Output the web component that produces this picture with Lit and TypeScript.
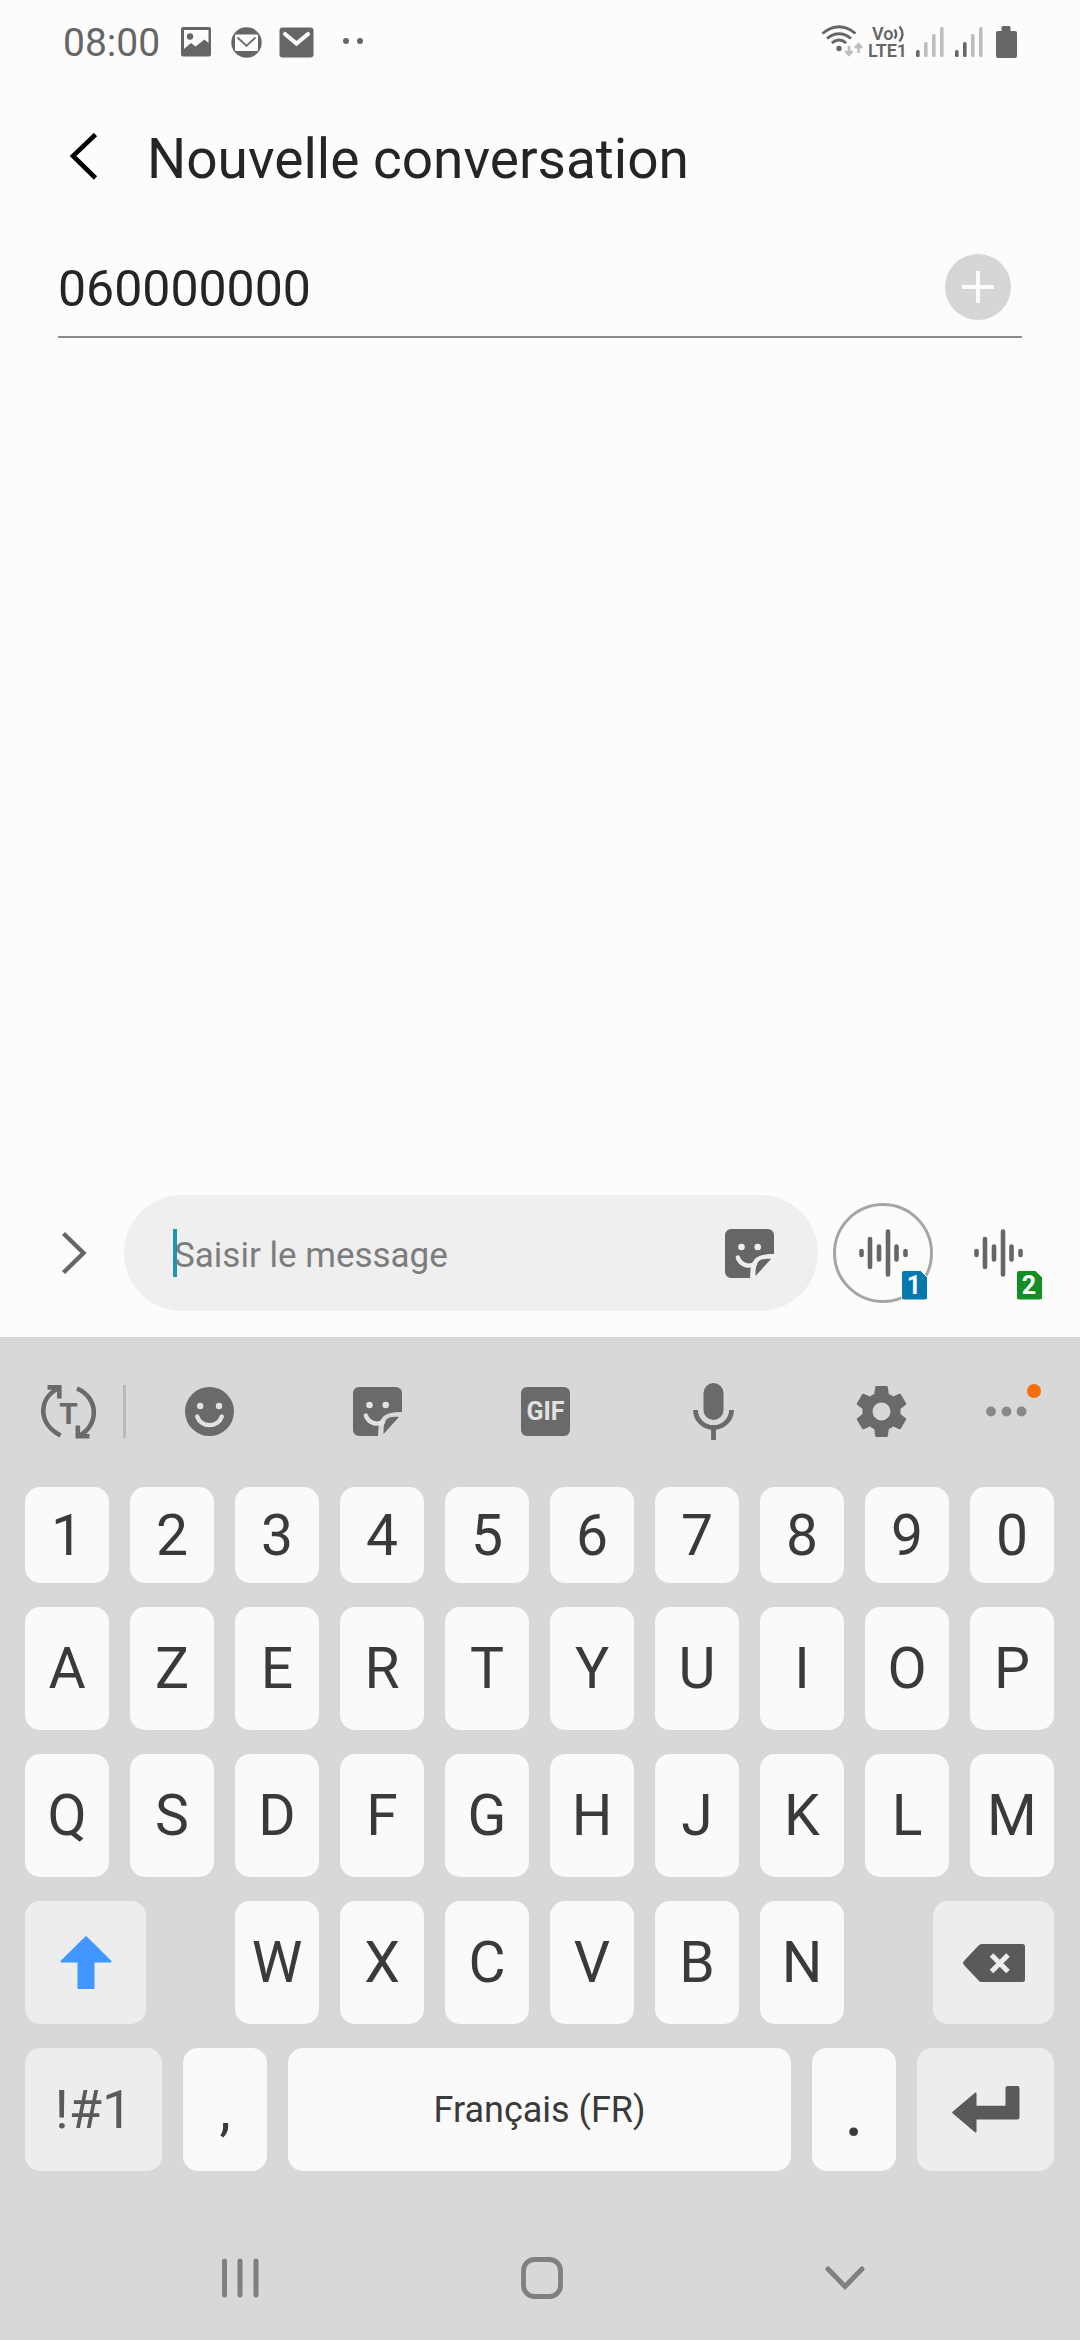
import { LitElement, html, svg, css } from "lit";
import { customElement, property, state } from "lit/decorators.js";

const sticker = html`
  <svg width="49" height="49" viewBox="0 0 49 49" aria-hidden="true">
    <path fill="currentColor" d="M6 0H43a6 6 0 0 1 6 6V25C39 25 33 26.5 29.5 30.5C26 34.500 25.500 39 25 49H6a6 6 0 0 1-6-6V6a6 6 0 0 1 6-6Z" />
    <path fill="currentColor" d="M30.500 47L46 30C40 29.500 36 30 33.500 32.500C30.500 36 30.500 41 30.500 47Z" />
    <circle class="cut" cx="16.500" cy="18" r="3.300" />
    <circle class="cut" cx="32.700" cy="18" r="3.300" />
    <path class="cut-line" d="M12.800 28.500C15.500 36 23.500 38.500 30 35" />
  </svg>`;

const wave = html`
  <svg width="52" height="48" viewBox="0 0 52 48" aria-hidden="true">
    <g stroke="currentColor" stroke-width="4.600" stroke-linecap="round">
      <path d="M4.500 22v4M13 10v28M22 17.500v13M31 2.500v43M39.500 17.500v13M48.500 22v4" />
    </g>
  </svg>`;

const toolIcons = [
  {
    label: "Émojis",
    art: html`<svg width="49" height="49" viewBox="0 0 49 49" aria-hidden="true">
      <circle fill="currentColor" cx="24.500" cy="24.500" r="24.500" />
      <circle class="cut" cx="15.200" cy="19" r="3.200" />
      <circle class="cut" cx="34" cy="19" r="3.200" />
      <path class="cut-line" d="M12.200 29.500C16 41 33 41 36.800 29.500" />
    </svg>`,
  },
  { label: "Autocollants", art: sticker },
  {
    label: "GIF",
    art: html`<svg width="49" height="49" viewBox="0 0 49 49" aria-hidden="true">
      <rect fill="currentColor" width="49" height="49" rx="6" />
      <text class="cut gif" x="24.500" y="33" text-anchor="middle">GIF</text>
    </svg>`,
  },
  {
    label: "Saisie vocale",
    art: html`<svg width="41" height="57" viewBox="0 0 41 57" aria-hidden="true">
      <rect fill="currentColor" x="10.500" width="20" height="37" rx="10" />
      <path fill="none" stroke="currentColor" stroke-width="4.800" d="M2.500 27a18 17.500 0 0 0 36 0M20.500 44.500V57" />
    </svg>`,
  },
  {
    label: "Paramètres",
    art: html`<svg width="61" height="61" viewBox="0 0 24 24" aria-hidden="true">
      <path
        fill="currentColor"
        d="M19.430 12.980c.04-.32.07-.64.07-.98s-.03-.66-.07-.98l2.110-1.650c.19-.15.24-.42.12-.64l-2-3.460c-.12-.22-.39-.3-.61-.22l-2.490 1c-.52-.4-1.080-.73-1.690-.98l-.38-2.650C14.460 2.180 14.250 2 14 2h-4c-.25 0-.46.18-.49.42l-.38 2.650c-.61.25-1.170.59-1.690.98l-2.490-1c-.23-.09-.49 0-.61.22l-2 3.460c-.13.22-.07.49.12.64l2.110 1.650c-.04.32-.07.65-.07.98s.03.66.07.98l-2.110 1.650c-.19.15-.24.42-.12.64l2 3.460c.12.22.39.3.61.22l2.490-1c.52.4 1.080.73 1.690.98l.38 2.650c.03.24.24.42.49.42h4c.25 0 .46-.18.49-.42l.38-2.650c.61-.25 1.170-.59 1.690-.98l2.490 1c.23.09.49 0 .61-.22l2-3.460c.12-.22.07-.49-.12-.64l-2.110-1.650zM12 15.500c-1.930 0-3.500-1.570-3.500-3.500s1.570-3.500 3.500-3.500 3.500 1.570 3.500 3.500-1.570 3.500-3.500 3.500z"
      />
    </svg>`,
  },
];

/** Colours shared by the drawings that punch shapes out of a solid icon. */
const iconStyles = css`
  svg {
    display: block;
  }
  .cut {
    fill: var(--cut);
  }
  .cut-line {
    fill: none;
    stroke: var(--cut);
    stroke-width: 4.4px;
    stroke-linecap: round;
  }
  button {
    margin: 0;
    padding: 0;
    border: 0;
    background: none;
    color: inherit;
    font: inherit;
    display: flex;
    align-items: center;
    justify-content: center;
    cursor: pointer;
  }
`;

@customElement("status-bar")
export class StatusBar extends LitElement {
  static styles = [
    iconStyles,
    css`
      :host {
        display: flex;
        justify-content: space-between;
        align-items: center;
        height: 84px;
        padding: 0 63px;
        color: #666;
        --cut: #fcfcfc;
      }
      .notices,
      .system {
        display: flex;
        align-items: center;
      }
      .time {
        width: 108px;
        padding-top: 1px;
        font-size: 39px;
      }
      .notice {
        display: flex;
        justify-content: center;
        width: 50px;
      }
      .notice.more {
        width: 64px;
      }
      .system {
        gap: 6px;
      }
      .faint {
        color: #bebebe;
      }
      .volte {
        font-family: Roboto, "Liberation Sans", sans-serif;
        font-weight: 600;
        font-size: 18px;
      }
    `,
  ];

  private signal(strength: number) {
    const bars = [7, 15, 23, 30];
    return html`<svg width="33" height="32" viewBox="0 0 33 32" aria-hidden="true">
      ${bars.map(
        (h, i) => svg`<rect class=${i < strength ? "" : "faint"} fill="currentColor"
          x=${1 + i * 8} y=${31 - h} width="3.600" height=${h} rx="1.500" />`,
      )}
    </svg>`;
  }

  render() {
    return html`
      <div class="notices">
        <time class="time">08:00</time>
        <span class="notice">
          <svg width="30" height="30" viewBox="0 0 30 30" aria-hidden="true">
            <rect fill="currentColor" width="30" height="29.500" rx="2" />
            <path class="cut" d="M3 3H27.500V16L23.500 12.500L14.500 19.500L10 16L3 22Z" />
            <circle fill="currentColor" cx="9" cy="9.500" r="3.200" />
          </svg>
        </span>
        <span class="notice">
          <svg width="31" height="31" viewBox="0 0 31 31" aria-hidden="true">
            <circle fill="currentColor" cx="15.500" cy="15.500" r="15.200" />
            <rect class="cut" x="4" y="7.500" width="23" height="16.500" rx="1" />
            <path fill="none" stroke="currentColor" stroke-width="1.800" d="M6.500 10.500L15.500 18.800L24.500 10.500" />
          </svg>
        </span>
        <span class="notice">
          <svg width="35" height="31" viewBox="0 0 35 31" aria-hidden="true">
            <rect fill="currentColor" x=".5" y=".5" width="34" height="30" rx="3" />
            <path fill="none" stroke="#fcfcfc" stroke-width="4.200" stroke-linecap="round" d="M6 7L17.500 16.500L29 7" />
          </svg>
        </span>
        <span class="notice more">
          <svg width="22" height="8" viewBox="0 0 22 8" aria-hidden="true">
            <circle fill="currentColor" cx="4" cy="3" r="3" />
            <circle fill="currentColor" cx="18" cy="3" r="3" />
          </svg>
        </span>
      </div>
      <div class="system">
        <svg width="42" height="34" viewBox="0 0 42 34" aria-hidden="true">
          <g fill="none" stroke="currentColor" stroke-width="2.800">
            <path d="M1.500 8.500Q18 -5 34.500 8.500M6 13.500Q18 4 30 13.500M10.800 18Q18 12 25.200 18" />
          </g>
          <circle fill="currentColor" cx="18" cy="23.500" r="2.700" />
          <g class="faint" fill="none" stroke="currentColor" stroke-width="2.600">
            <path d="M28 21V29.500M24.500 26L28 29.800L31.500 26M37.500 28V19.500M34 23L37.500 19.200L41 23" />
          </g>
        </svg>
        <svg class="volte" width="40" height="36" viewBox="0 0 40 36" aria-hidden="true">
          <text fill="currentColor" x="3" y="16">Vo</text>
          <text fill="currentColor" x="-1" y="33">LTE1</text>
          <g fill="none" stroke="currentColor" stroke-width="2.400">
            <path d="M25.500 5.500Q29 10 25.500 14.500M30.500 2.500Q36.500 10 30.500 17.500" />
          </g>
        </svg>
        ${this.signal(1)} ${this.signal(2)}
        <svg width="24" height="33" viewBox="0 0 24 33" aria-hidden="true">
          <path fill="currentColor" d="M10 0h6a1.500 1.500 0 0 1 1.500 1.500V5H22a2 2 0 0 1 2 2V30a2 2 0 0 1-2 2H5a2 2 0 0 1-2-2V7a2 2 0 0 1 2-2H8.500V1.500A1.500 1.500 0 0 1 10 0Z" />
        </svg>
      </div>
    `;
  }
}

@customElement("voice-button")
export class VoiceButton extends LitElement {
  @property({ type: Number }) sim = 1;
  @property({ type: Boolean, reflect: true }) selected = false;

  static styles = [
    iconStyles,
    css`
      :host {
        display: block;
        color: #666;
      }
      .voice {
        position: relative;
        box-sizing: border-box;
        width: 100px;
        height: 100px;
        border: 3px solid transparent;
        border-radius: 50%;
      }
      :host([selected]) .voice {
        border-color: #a5a5a5;
      }
      .badge {
        position: absolute;
        left: 65px;
        top: 64px;
      }
      .one {
        fill: #0479ad;
      }
      .two {
        fill: #118f25;
      }
      .digit {
        fill: #fff;
        font: 700 25px Roboto, "Liberation Sans", sans-serif;
      }
    `,
  ];

  render() {
    return html`<button class="voice" aria-label=${`Message vocal, SIM ${this.sim}`}>
      ${wave}
      <svg class="badge" width="27" height="31" viewBox="0 0 27 31" aria-hidden="true">
        <path class=${this.sim === 1 ? "one" : "two"} stroke="#fcfcfc" d="M3 .5H19.500L26.500 7.500V27.500a2.500 2.500 0 0 1-2.500 2.500H3a2.500 2.500 0 0 1-2.500-2.500V3A2.500 2.500 0 0 1 3 .5Z" />
        <text class="digit" x="13" y="24" text-anchor="middle">${this.sim}</text>
      </svg>
    </button>`;
  }
}

@customElement("soft-keyboard")
export class SoftKeyboard extends LitElement {
  static styles = [
    iconStyles,
    css`
      :host {
        display: block;
        background: #d8d8d8;
        color: #3a3a3a;
        --cut: #e2e2e2;
      }
      .tools {
        box-sizing: border-box;
        display: grid;
        grid-template-columns: 123px 3px repeat(5, 1fr) 115px;
        align-items: center;
        height: 150px;
        padding-bottom: 2px;
        border-top: 1px solid #d3d3d3;
        color: #6a6a6a;
      }
      .tool {
        height: 100px;
      }
      .translate {
        padding-left: 14px;
      }
      .rule {
        height: 53px;
        background: #b9b9b9;
      }
      .gif {
        font: 700 25px Roboto, "Liberation Sans", sans-serif;
      }
      .letter {
        font: 700 30px Roboto, "Liberation Sans", sans-serif;
      }
      .rows {
        display: grid;
        gap: 24px;
        padding: 0 26px 45px 25px;
      }
      .row {
        display: grid;
        grid-template-columns: repeat(10, 1fr);
        gap: 21px;
        height: 123px;
      }
      .row.digits {
        height: 96px;
      }
      .row.shifted {
        grid-template-columns: 121fr 47fr repeat(6, 84fr) 47fr 121fr;
      }
      .row.bottom {
        grid-template-columns: 137fr 84fr 503fr 84fr 137fr;
      }
      .key {
        border-radius: 15px;
        background: #fafafa;
        font-size: 57px;
        min-width: 0;
      }
      .key.action {
        background: #ededed;
        color: #5a5a5a;
      }
      .key.symbols {
        font-size: 54px;
      }
      .key.space {
        font-size: 36px;
      }
      .key.period {
        font-size: 78px;
      }
      .shift {
        color: #4296ff;
      }
      .nav {
        display: grid;
        grid-template-columns: repeat(3, 1fr);
        height: 124px;
        padding: 0 84px 0 89px;
        color: #808080;
      }
    `,
  ];

  private keys(chars: string) {
    return [...chars].map((c) => html`<button class="key">${c}</button>`);
  }

  render() {
    return html`
      <div class="tools">
        <button class="tool translate" aria-label="Traduire">
          <svg width="56" height="54" viewBox="0 0 56 54" aria-hidden="true">
            <g fill="none" stroke="currentColor" stroke-width="4.600">
              <path d="M19.500 50.500C-3 39 -3 14 17 3.500M6.500 2.400H18.300V13.500" />
              <path d="M36 3.500C58 13 58 40 38.500 50.500M36.800 40.500V51.200H48.500" />
            </g>
            <text class="letter" fill="currentColor" x="27.500" y="39" text-anchor="middle">T</text>
          </svg>
        </button>
        <span class="rule"></span>
        ${toolIcons.map((t) => html`<button class="tool" aria-label=${t.label}>${t.art}</button>`)}
        <button class="tool" aria-label="Plus d'options">
          <svg width="82" height="56" viewBox="0 0 82 56" aria-hidden="true">
            <g fill="#888">
              <circle cx="9" cy="27.500" r="4.900" />
              <circle cx="24.500" cy="27.500" r="4.900" />
              <circle cx="39.500" cy="27.500" r="4.900" />
            </g>
            <circle fill="#f76b09" cx="52" cy="7" r="7" />
          </svg>
        </button>
      </div>
      <div class="rows">
        <div class="row digits">${this.keys("1234567890")}</div>
        <div class="row">${this.keys("AZERTYUIOP")}</div>
        <div class="row">${this.keys("QSDFGHJKLM")}</div>
        <div class="row shifted">
          <button class="key action" aria-label="Majuscule">
            <svg class="shift" width="52" height="53" viewBox="0 0 52 53" aria-hidden="true">
              <path fill="currentColor" stroke="currentColor" stroke-width="2" stroke-linejoin="round" d="M26 1.200L50.500 25.500H33.500V52H18.500V25.500H1.500Z" />
            </svg>
          </button>
          <span></span>
          ${this.keys("WXCVBN")}
          <span></span>
          <button class="key action" aria-label="Effacer">
            <svg width="62" height="38" viewBox="0 0 62 38" aria-hidden="true">
              <path fill="currentColor" d="M18.500 0H59.500A2.500 2.500 0 0 1 62 2.500V35.500A2.500 2.500 0 0 1 59.500 38H18.500Q17 38 15.500 36.500L1 21Q-.8 19 1 17L15.500 1.500Q17 0 18.500 0Z" />
              <path stroke="#ededed" stroke-width="5" d="M28.500 11L45 27.500M45 11L28.500 27.500" />
            </svg>
          </button>
        </div>
        <div class="row bottom">
          <button class="key action symbols">!#1</button>
          <button class="key">,</button>
          <button class="key space">Français (FR)</button>
          <button class="key period">.</button>
          <button class="key action" aria-label="Entrée">
            <svg width="68" height="47" viewBox="0 0 68 47" aria-hidden="true">
              <path fill="currentColor" d="M55.500 0H65.500A2 2 0 0 1 67.500 2V31.500A2 2 0 0 1 65.500 33.500H24.500V45.500Q24.500 47 23 46.200L.8 27.500Q-.3 26.500 .8 25.500L23 6.800Q24.500 6 24.500 7.500V19.800H53.500V2A2 2 0 0 1 55.500 0Z" />
            </svg>
          </button>
        </div>
      </div>
      <nav class="nav" aria-label="Navigation">
        <button aria-label="Applications récentes">
          <svg width="38" height="42" viewBox="0 0 38 42" aria-hidden="true">
            <path stroke="currentColor" stroke-width="5" stroke-linecap="round" d="M3.500 4V38M19 4V38M35 4V38" />
          </svg>
        </button>
        <button aria-label="Accueil">
          <svg width="42" height="42" viewBox="0 0 42 42" aria-hidden="true">
            <rect fill="none" stroke="currentColor" stroke-width="4.800" x="2.500" y="2.500" width="37" height="37" rx="11" />
          </svg>
        </button>
        <button aria-label="Masquer le clavier">
          <svg width="40" height="24" viewBox="0 0 40 24" aria-hidden="true">
            <path fill="none" stroke="currentColor" stroke-width="5" stroke-linecap="round" d="M3 3L20 20.500L37 3" />
          </svg>
        </button>
      </nav>
    `;
  }
}

@customElement("app-root")
export class AppRoot extends LitElement {
  @state() private recipient = "060000000";

  static styles = [
    iconStyles,
    css`
      :host {
        display: flex;
        flex-direction: column;
        min-height: 100vh;
        background: #fcfcfc;
        color: #252525;
        font-family: Roboto, "Liberation Sans", sans-serif;
        --cut: #efefef;
      }
      input {
        box-sizing: border-box;
        min-width: 0;
        border: 0;
        outline: 0;
        background: none;
        color: inherit;
        font-family: inherit;
      }
      .header {
        display: flex;
        align-items: center;
        height: 150px;
        padding-left: 21px;
      }
      .back {
        width: 126px;
        height: 100px;
        color: #000;
      }
      .title {
        margin: 0;
        font-size: 55px;
        font-weight: 400;
      }
      .recipient {
        display: flex;
        align-items: center;
        height: 98px;
        margin: 0 58px;
        padding: 4px 11px 0 0;
        border-bottom: 2px solid #8c8c8c;
      }
      .number {
        flex: 1;
        padding: 4px 0 0;
        font-size: 50px;
      }
      .thread {
        flex: 1;
      }
      .compose {
        display: flex;
        align-items: center;
        gap: 15px;
        padding: 0 32px 26px 0;
        color: #666;
      }
      .entry {
        display: flex;
        flex: 1;
        align-items: center;
      }
      .expand {
        width: 124px;
        height: 116px;
        padding-left: 24px;
      }
      .pill {
        display: flex;
        flex: 1;
        align-items: center;
        height: 116px;
        box-sizing: border-box;
        padding: 0 44px 0 49px;
        border-radius: 58px;
        background: #efefef;
      }
      .field {
        position: relative;
        display: flex;
        flex: 1;
      }
      .message {
        flex: 1;
        padding: 4px 0 0 1px;
        font-size: 35px;
        position: relative;
      }
      .message::placeholder {
        color: #7d7d7d;
        opacity: 1;
      }
      .caret {
        position: absolute;
        left: 0;
        top: 50%;
        width: 4px;
        height: 48px;
        margin-top: -24px;
        background: #1a95b5;
      }
    `,
  ];

  render() {
    return html`
      <status-bar></status-bar>
      <header class="header">
        <button class="back" aria-label="Retour">
          <svg width="30" height="52" viewBox="0 0 30 52" aria-hidden="true">
            <path fill="none" stroke="currentColor" stroke-width="4.600" d="M26.500 1.500L4 23L26.500 45" />
          </svg>
        </button>
        <h1 class="title">Nouvelle conversation</h1>
      </header>
      <div class="recipient">
        <input
          class="number"
          type="tel"
          aria-label="Destinataire"
          .value=${this.recipient}
          @input=${(e: Event) => (this.recipient = (e.target as HTMLInputElement).value)}
        />
        <button aria-label="Ajouter un destinataire">
          <svg width="66" height="66" viewBox="0 0 66 66" aria-hidden="true">
            <circle fill="#d6d6d6" cx="33" cy="33" r="33" />
            <path stroke="#fcfcfc" stroke-width="4" d="M33 17V49M17 33H49" />
          </svg>
        </button>
      </div>
      <main class="thread"></main>
      <div class="compose">
        <div class="entry">
          <button class="expand" aria-label="Plus d'actions">
            <svg width="26" height="44" viewBox="0 0 26 44" aria-hidden="true">
              <path fill="none" stroke="currentColor" stroke-width="4.400" d="M2.500 2.500L22.500 22L2.500 41.500" />
            </svg>
          </button>
          <div class="pill">
            <div class="field">
              <span class="caret"></span>
              <input class="message" type="text" aria-label="Message" placeholder="Saisir le message" />
            </div>
            <button aria-label="Autocollants">${sticker}</button>
          </div>
        </div>
        <voice-button sim="1" selected></voice-button>
        <voice-button sim="2"></voice-button>
      </div>
      <soft-keyboard></soft-keyboard>
    `;
  }
}
